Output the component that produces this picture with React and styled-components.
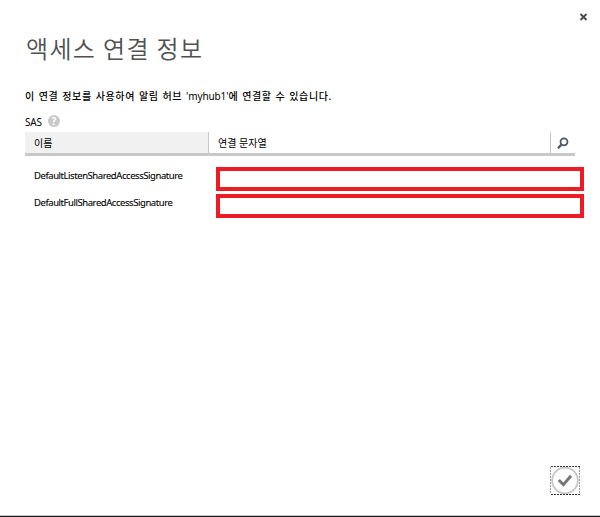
import React from "react";
import styled, { createGlobalStyle } from "styled-components";

const GlobalStyle = createGlobalStyle`
  *, *::before, *::after { box-sizing: border-box; }
  body { margin: 0; background: #fff; }
`;

const Dialog = styled.main`
  display: flex;
  flex-direction: column;
  width: 600px;
  height: 517px;
  padding: 12px 16px 0 25px;
  overflow: hidden;
  background: #fff;
  border-bottom: 1px solid #17171b;
  box-shadow: inset 0 -1px 0 #c9c9cf;
  color: #000;
  font-family: "Noto Sans", "Noto Sans CJK KR", sans-serif;
  font-size: 10px;
`;

const CloseButton = styled.button`
  align-self: flex-end;
  width: 9px;
  height: 9px;
  margin-right: -4px;
  padding: 0;
  border: 0;
  background: none;
  svg { display: block; }
`;

const Title = styled.h1`
  height: 36px;
  margin: 9px 0 0 1px;
  color: #505050;
  font-family: "Noto Sans CJK KR", sans-serif;
  font-size: 24px;
  font-weight: 350;
  line-height: 36px;
  letter-spacing: 1.35px;
  white-space: nowrap;
`;

const Description = styled.p`
  height: 16px;
  margin: 22px 0 0;
  font-size: 10px;
  font-weight: 500;
  line-height: 16px;
  letter-spacing: 0.62px;
  word-spacing: 0.7px;
  white-space: nowrap;
`;

const HubName = styled.span`
  font-weight: 400;
  letter-spacing: -0.1px;
`;

const SectionLabel = styled.div`
  display: flex;
  align-items: center;
  gap: 6px;
  height: 14px;
  margin-top: 10px;
  span { padding-top: 3px; line-height: 13px; letter-spacing: -0.2px; }
`;

const HelpBadge = styled.b`
  display: grid;
  place-items: center;
  width: 12px;
  height: 12px;
  margin-top: -1px;
  border-radius: 50%;
  background: #c8c8c8;
  color: #fff;
  font-size: 10px;
  line-height: 12px;
`;

const HeaderRow = styled.div`
  display: grid;
  grid-template-columns: 183px 342px 25px;
  grid-template-rows: 21px;
  width: 550px;
  height: 24px;
  margin-top: 4px;
  border-bottom: 3px solid #c8c8c8;
`;

const HeaderCell = styled.div`
  height: 21px;
  padding-left: 9px;
  border-left: ${(p) => (p.$first ? "0" : "1px solid #c8c8c8")};
  background: ${(p) => (p.$first ? "#f1f1f1" : "#fff")};
  line-height: 22px;
`;

const SearchCell = styled(HeaderCell)`
  padding: 5px 0 0 6px;
  svg { display: block; }
`;

const Rows = styled.div`
  display: flex;
  flex-direction: column;
  gap: 3px;
  margin-top: 11px;
`;

const Row = styled.div`
  display: grid;
  grid-template-columns: 182px 368px;
  height: 24px;
  padding-left: 9px;
`;

const KeyName = styled.span`
  font-size: 9.5px;
  line-height: 18px;
  letter-spacing: -0.44px;
  -webkit-text-stroke: 0.1px #000;
`;

const ConnectionValue = styled.div`
  border: 4px solid #ed1c24;
  background: #fff;
`;

const Footer = styled.footer`
  display: flex;
  justify-content: flex-end;
  margin: auto 4px 21px 0;
`;

const ConfirmButton = styled.button`
  width: 30px;
  height: 29px;
  padding: 0;
  border: 0;
  background: none;
  svg { display: block; }
`;

const keys = ["DefaultListenSharedAccessSignature", "DefaultFullSharedAccessSignature"];

export default function App() {
  return (
    <>
      <GlobalStyle />
      <Dialog>
        <CloseButton aria-label="닫기">
          <svg width="9" height="9" viewBox="0 0 9 9">
            <path d="M1.5 2L7.5 8M7.5 2L1.5 8" stroke="#484848" strokeWidth="1.8" />
          </svg>
        </CloseButton>
        <Title>액세스 연결 정보</Title>
        <Description>
          이 연결 정보를 사용하여 알림 허브 <HubName>'myhub1'</HubName>에 연결할 수 있습니다.
        </Description>
        <SectionLabel>
          <span>SAS</span>
          <HelpBadge>?</HelpBadge>
        </SectionLabel>
        <HeaderRow>
          <HeaderCell $first>이름</HeaderCell>
          <HeaderCell>연결 문자열</HeaderCell>
          <SearchCell>
            <svg width="12" height="13" viewBox="0 0 12 13">
              <circle cx="7" cy="4.8" r="3.5" fill="none" stroke="#515864" strokeWidth="1.8" />
              <path d="M4.7 7.3L1 11.3" stroke="#515864" strokeWidth="2.4" />
            </svg>
          </SearchCell>
        </HeaderRow>
        <Rows>
          {keys.map((name) => (
            <Row key={name}>
              <KeyName>{name}</KeyName>
              <ConnectionValue />
            </Row>
          ))}
        </Rows>
        <Footer>
          <ConfirmButton aria-label="확인">
            <svg width="30" height="29" viewBox="0 0 30 29">
              <circle cx="15" cy="14.5" r="12.8" fill="none" stroke="#c6c6c6" strokeWidth="1.8" />
              <path d="M8.8 14L13.4 18.7L21 9.8" fill="none" stroke="#747474" strokeWidth="2.9" />
              <path d="M1 .5H30M1 28.5H30" stroke="#333" strokeDasharray="2 1" />
              <path d="M.5 1V28M29.5 1V28" stroke="#999" strokeDasharray="2 1" />
            </svg>
          </ConfirmButton>
        </Footer>
      </Dialog>
    </>
  );
}
